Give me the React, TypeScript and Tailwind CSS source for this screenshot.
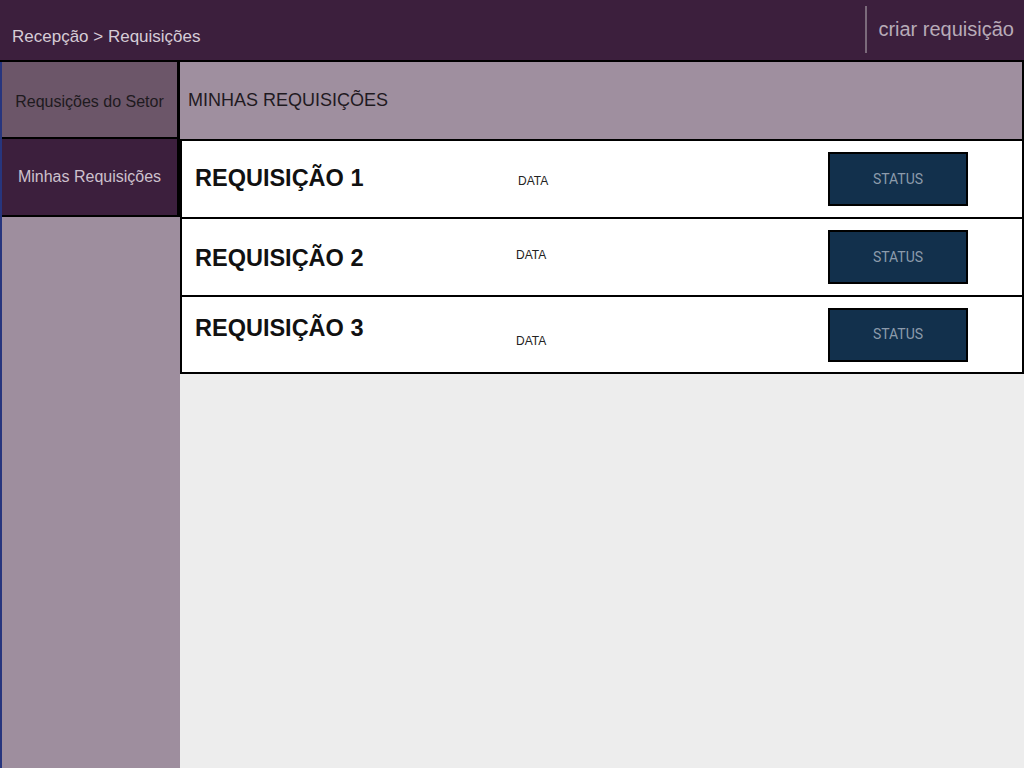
import React from 'react';

const requisicoes = [
  { id: 1, titleOffset: 'pt-0', dataOffset: 'mt-1 w-[310px]' },
  { id: 2, titleOffset: 'pt-1', dataOffset: '-mt-1 -ml-[2px] w-[312px]' },
  { id: 3, titleOffset: '-mt-3', dataOffset: 'mt-3 -ml-[2px] w-[312px]' },
];

export default function App() {
  return (
    <div className="flex h-[768px] w-[1024px] flex-col overflow-hidden bg-[#ededed] font-['Liberation_Sans',Arial,sans-serif]">
      {/* Top bar */}
      <header className="flex h-[62px] shrink-0 items-stretch border-b-2 border-black bg-[#3c1f3d]">
        <div className="flex flex-1 items-end pb-[11px] pl-3 text-[17px] text-[#d6ccd6]">
          Recepção &gt; Requisições
        </div>
        <div className="flex items-start pt-[6px]">
          <div className="h-[47px] w-[2px] bg-[#7b6a7b]" />
          <button className="pl-[11px] pr-[10px] pt-[13px] text-[20px] leading-none text-[#b8abb8]">criar requisição</button>
        </div>
      </header>

      <div className="flex flex-1">
        {/* Sidebar */}
        <aside className="flex w-[180px] shrink-0 flex-col border-l-2 border-[#27357e] bg-[#9e8e9e]">
          <div className="flex h-[77px] items-center justify-center border-r-[3px] border-b-2 border-black bg-[#6c5669] pt-[4px] text-[16px] text-[#1e1a1e]">
            Requsições do Setor
          </div>
          <div className="flex h-[78px] items-center justify-center border-r-[3px] border-b-2 border-black bg-[#3c1f3d] text-[16px] text-[#cdc1cd]">
            Minhas Requisições
          </div>
        </aside>

        {/* Main */}
        <main className="flex flex-1 flex-col">
          <div className="flex h-[77px] items-center border-r-2 border-black bg-[#9f8f9f] pl-2 text-[18px] text-[#1f1a1f]">
            MINHAS REQUISIÇÕES
          </div>
          <div className="border-l-2 border-black">
            {requisicoes.map((r) => (
              <div
                key={r.id}
                className="flex h-[78px] items-center border-t-2 border-r-2 border-black bg-white last:h-[79px] last:border-b-2"
              >
                <div className={`w-[336px] pl-[13px] text-[23.5px] font-bold text-[#111] ${r.titleOffset}`}>
                  REQUISIÇÃO {r.id}
                </div>
                <div className={`text-[12px] text-[#222] ${r.dataOffset}`}>DATA</div>
                <div className="flex h-[54px] w-[140px] items-center justify-center border-2 border-black bg-[#12304c] font-['Roboto',sans-serif] text-[14px] text-[#8c9bab]">
                  STATUS
                </div>
              </div>
            ))}
          </div>
        </main>
      </div>
    </div>
  );
}
